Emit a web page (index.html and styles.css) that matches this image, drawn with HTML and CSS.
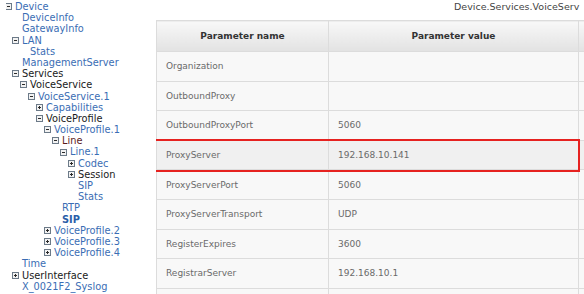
FILE: index.html
```html
<!DOCTYPE html>
<html>
<head>
<meta charset="utf-8">
<link rel="stylesheet" href="styles.css">
</head>
<body>
<div class="page">
  <div class="tree">
    <div class="node l0 link first"><svg class="ico" viewBox="0 0 7 7"><rect x="0.5" y="0.5" width="6" height="6"/><path d="M2 3.5H5"/></svg>Device</div>
    <div class="node l1 link leaf">DeviceInfo</div>
    <div class="node l1 link leaf">GatewayInfo</div>
    <div class="node l1 link"><svg class="ico" viewBox="0 0 7 7"><rect x="0.5" y="0.5" width="6" height="6"/><path d="M2 3.5H5"/></svg>LAN</div>
    <div class="node l2 link leaf">Stats</div>
    <div class="node l1 link leaf">ManagementServer</div>
    <div class="node l1 dark"><svg class="ico" viewBox="0 0 7 7"><rect x="0.5" y="0.5" width="6" height="6"/><path d="M2 3.5H5"/></svg>Services</div>
    <div class="node l2 dark"><svg class="ico" viewBox="0 0 7 7"><rect x="0.5" y="0.5" width="6" height="6"/><path d="M2 3.5H5"/></svg>VoiceService</div>
    <div class="node l3 link"><svg class="ico" viewBox="0 0 7 7"><rect x="0.5" y="0.5" width="6" height="6"/><path d="M2 3.5H5"/></svg>VoiceService.1</div>
    <div class="node l4 link"><svg class="ico" viewBox="0 0 7 7"><rect x="0.5" y="0.5" width="6" height="6"/><path d="M2 3.5H5M3.5 2V5"/></svg>Capabilities</div>
    <div class="node l4 dark"><svg class="ico" viewBox="0 0 7 7"><rect x="0.5" y="0.5" width="6" height="6"/><path d="M2 3.5H5"/></svg>VoiceProfile</div>
    <div class="node l5 link"><svg class="ico" viewBox="0 0 7 7"><rect x="0.5" y="0.5" width="6" height="6"/><path d="M2 3.5H5"/></svg>VoiceProfile.1</div>
    <div class="node l6 visited"><svg class="ico" viewBox="0 0 7 7"><rect x="0.5" y="0.5" width="6" height="6"/><path d="M2 3.5H5"/></svg>Line</div>
    <div class="node l7 link"><svg class="ico" viewBox="0 0 7 7"><rect x="0.5" y="0.5" width="6" height="6"/><path d="M2 3.5H5"/></svg>Line.1</div>
    <div class="node l8 link"><svg class="ico" viewBox="0 0 7 7"><rect x="0.5" y="0.5" width="6" height="6"/><path d="M2 3.5H5M3.5 2V5"/></svg>Codec</div>
    <div class="node l8 dark"><svg class="ico" viewBox="0 0 7 7"><rect x="0.5" y="0.5" width="6" height="6"/><path d="M2 3.5H5M3.5 2V5"/></svg>Session</div>
    <div class="node l8 link leaf">SIP</div>
    <div class="node l8 link leaf">Stats</div>
    <div class="node l6 link leaf">RTP</div>
    <div class="node l6 link leaf selected">SIP</div>
    <div class="node l5 link"><svg class="ico" viewBox="0 0 7 7"><rect x="0.5" y="0.5" width="6" height="6"/><path d="M2 3.5H5M3.5 2V5"/></svg>VoiceProfile.2</div>
    <div class="node l5 link"><svg class="ico" viewBox="0 0 7 7"><rect x="0.5" y="0.5" width="6" height="6"/><path d="M2 3.5H5M3.5 2V5"/></svg>VoiceProfile.3</div>
    <div class="node l5 link"><svg class="ico" viewBox="0 0 7 7"><rect x="0.5" y="0.5" width="6" height="6"/><path d="M2 3.5H5M3.5 2V5"/></svg>VoiceProfile.4</div>
    <div class="node l1 link leaf">Time</div>
    <div class="node l1 dark"><svg class="ico" viewBox="0 0 7 7"><rect x="0.5" y="0.5" width="6" height="6"/><path d="M2 3.5H5M3.5 2V5"/></svg>UserInterface</div>
    <div class="node l1 link leaf">X_0021F2_Syslog</div>
  </div>
  <div class="main">
    <div class="path">Device.Services.VoiceServ</div>
    <div class="tablewrap">
      <table class="params">
        <thead>
          <tr><th class="c1">Parameter name</th><th class="c2">Parameter value</th><th class="c3"></th></tr>
        </thead>
        <tbody>
          <tr><td>Organization</td><td></td><td></td></tr>
          <tr><td>OutboundProxy</td><td></td><td></td></tr>
          <tr><td>OutboundProxyPort</td><td>5060</td><td></td></tr>
          <tr class="hl"><td>ProxyServer</td><td>192.168.10.141</td><td></td></tr>
          <tr><td>ProxyServerPort</td><td>5060</td><td></td></tr>
          <tr><td>ProxyServerTransport</td><td>UDP</td><td></td></tr>
          <tr><td>RegisterExpires</td><td>3600</td><td></td></tr>
          <tr><td>RegistrarServer</td><td>192.168.10.1</td><td></td></tr>
          <tr class="last"><td></td><td></td><td></td></tr>
        </tbody>
      </table>
      <div class="redbox"></div>
    </div>
  </div>
</div>
</body>
</html>
```
FILE: styles.css
```css
html, body {
  margin: 0;
  padding: 0;
  background: #fff;
  overflow: hidden;
  width: 584px;
  height: 294px;
}
.page {
  display: flex;
  width: 584px;
  height: 294px;
  overflow: hidden;
}
.tree {
  width: 156px;
  flex: none;
  padding-top: 1px;
  font-family: "DejaVu Sans", Verdana, sans-serif;
  font-size: 9.8px;
  line-height: 11.2px;
}
.node {
  display: flex;
  align-items: center;
  white-space: nowrap;
  height: 11.2px;
}
.ico {
  width: 7px;
  height: 7px;
  flex: none;
  margin-right: 3px;
}
.ico rect {
  fill: #f2f2f2;
  stroke: #6c7a88;
  stroke-width: 1;
}
.ico path {
  stroke: #2a2a2a;
  stroke-width: 1;
  fill: none;
}
.first .ico {
  clip-path: inset(0 0 0 1px);
}
.leaf { padding-left: 10px; }
.l0 { margin-left: 5px; }
.l1 { margin-left: 12px; }
.l2 { margin-left: 20px; }
.l3 { margin-left: 28px; }
.l4 { margin-left: 36px; }
.l5 { margin-left: 44px; }
.l6 { margin-left: 52px; }
.l7 { margin-left: 60px; }
.l8 { margin-left: 68px; }
.link { color: #3a6db4; }
.dark { color: #1a1a1a; }
.visited { color: #5c1a1a; }
.selected { font-weight: bold; color: #2a5ea8; }

.main {
  flex: none;
  width: 428px;
  overflow: hidden;
}
.path {
  height: 20px;
  padding-left: 298px;
  font-family: "DejaVu Sans", Verdana, sans-serif;
  font-size: 9.5px;
  line-height: 13px;
  color: #444;
  white-space: nowrap;
  overflow: hidden;
}
.tablewrap {
  position: relative;
}
.params {
  border-collapse: collapse;
  font-family: "DejaVu Sans", Verdana, sans-serif;
  font-size: 9px;
  table-layout: fixed;
  width: 440px;
}
.params th, .params td {
  border: 1px solid #dcdcdc;
  padding: 0 0 0 9px;
  box-sizing: border-box;
  text-align: left;
  color: #6a6a6a;
  background: #f8f8f8;
  white-space: nowrap;
}
.params th {
  height: 31px;
  text-align: center;
  padding: 0;
  font-weight: bold;
  color: #333;
  background: linear-gradient(#f8f8f8, #e2e2e2);
}
.params td {
  height: 29.6px;
}
.params .last td {
  height: 6px;
}
.params .hl td {
  background: #f0f0f0;
}
.c1 { width: 172px; }
.c2 { width: 250px; }
.c3 { width: 18px; }
.redbox {
  position: absolute;
  left: -2px;
  top: 119px;
  width: 426px;
  height: 33px;
  border: 2px solid #e62220;
  box-sizing: border-box;
}
```
